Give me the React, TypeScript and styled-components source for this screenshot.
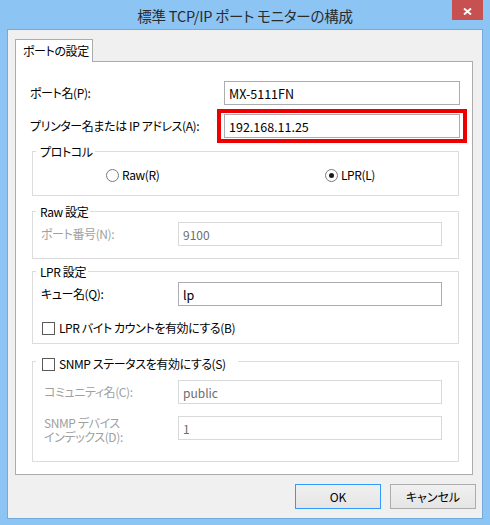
import styled, { createGlobalStyle } from "styled-components";

const GlobalStyle = createGlobalStyle`
  html, body {
    margin: 0;
    padding: 0;
  }
  body {
    background: #8cc4f4;
    font-family: "Noto Sans CJK JP", "Noto Sans", sans-serif;
    font-feature-settings: "palt";
    font-size: 12px;
    letter-spacing: -0.4px;
    color: #000;
  }
  * {
    box-sizing: border-box;
  }
`;

export default function App() {
  return (
    <>
      <GlobalStyle />
      <Window>
        <TitleBar>
          <Title>標準 TCP/IP ポート モニターの構成</Title>
          <CloseButton>
            <svg width="9" height="7" viewBox="0 0 9 7">
              <path d="M1 0.5 L8 6.5 M8 0.5 L1 6.5" stroke="#fff" strokeWidth="1.9" />
            </svg>
          </CloseButton>
        </TitleBar>

        <Client>
          <TabStrip>
            <Tab>ポートの設定</Tab>
          </TabStrip>

          <Page>
            <FieldRow $label={194}>
              <Label>ポート名(P):</Label>
              <TextBox defaultValue="MX-5111FN" readOnly />
            </FieldRow>

            <FieldRow $label={194} $top={9}>
              <Label>プリンター名または IP アドレス(A):</Label>
              <Highlight>
                <TextBox defaultValue="192.168.11.25" readOnly />
              </Highlight>
            </FieldRow>

            <Group $top={13} $pad="15px 8px 12px 8px">
              <Legend>プロトコル</Legend>
              <RadioRow>
                <Choice>
                  <Radio />
                  Raw(R)
                </Choice>
                <Choice>
                  <Radio $checked />
                  LPR(L)
                </Choice>
              </RadioRow>
            </Group>

            <Group $top={15} $pad="10px 16px 12px 8px">
              <Legend>Raw 設定</Legend>
              <FieldRow $label={137}>
                <Label $disabled>ポート番号(N):</Label>
                <TextBox defaultValue="9100" disabled />
              </FieldRow>
            </Group>

            <Group $top={12} $pad="10px 16px 7px 8px">
              <Legend>LPR 設定</Legend>
              <FieldRow $label={137}>
                <Label>キュー名(Q):</Label>
                <TextBox defaultValue="lp" readOnly />
              </FieldRow>
              <CheckRow $top={14}>
                <Check />
                LPR バイト カウントを有効にする(B)
              </CheckRow>
            </Group>

            <Group $top={17} $pad="18px 16px 17px 11px">
              <Legend $offset={-6} $width={202}>
                <CheckRow>
                  <Check />
                  SNMP ステータスを有効にする(S)
                </CheckRow>
              </Legend>
              <FieldRow $label={134}>
                <Label $disabled>コミュニティ名(C):</Label>
                <TextBox defaultValue="public" disabled />
              </FieldRow>
              <FieldRow $label={134} $top={12} $align="start">
                <Label $disabled $lines>
                  SNMP デバイス
                  <br />
                  インデックス(D):
                </Label>
                <TextBox defaultValue="1" disabled />
              </FieldRow>
            </Group>
          </Page>

          <ButtonRow>
            <Button $primary>OK</Button>
            <Button>キャンセル</Button>
          </ButtonRow>
        </Client>
      </Window>
    </>
  );
}

const Window = styled.div`
  width: 490px;
  height: 525px;
  display: flex;
  flex-direction: column;
  padding: 0 7px 6px 7px;
  background: #8cc4f4;
`;

const TitleBar = styled.div`
  height: 29px;
  display: grid;
  grid-template-columns: 1fr auto 1fr;
`;

const Title = styled.div`
  grid-column: 2;
  font-size: 14.5px;
  letter-spacing: -0.2px;
  line-height: 31px;
  color: #2b2b2b;
  white-space: nowrap;
`;

const CloseButton = styled.div`
  grid-column: 3;
  justify-self: end;
  align-self: start;
  width: 31px;
  height: 20px;
  background: #c75050;
  display: flex;
  align-items: center;
  justify-content: center;
  padding-top: 3px;
`;

const Client = styled.div`
  flex: 1;
  display: flex;
  flex-direction: column;
  background: #f0f0f0;
  border: 1px solid #74a9de;
  padding: 9px 6px 0 7px;
`;

const TabStrip = styled.div`
  display: flex;
`;

const Tab = styled.div`
  position: relative;
  z-index: 1;
  width: 78px;
  height: 23px;
  margin-bottom: -1px;
  padding-left: 7px;
  background: #fff;
  border: 1px solid #acacac;
  border-bottom: none;
  line-height: 21px;
  white-space: nowrap;
`;

const Page = styled.div`
  height: 414px;
  margin-right: 3px;
  background: #fff;
  border: 1px solid #acacac;
  padding: 19px 12px 0 14px;
`;

const FieldRow = styled.div<{ $label: number; $top?: number; $align?: string }>`
  display: grid;
  grid-template-columns: ${(p) => p.$label}px 1fr;
  align-items: ${(p) => p.$align ?? "center"};
  margin-top: ${(p) => p.$top ?? 0}px;
`;

const Label = styled.div<{ $disabled?: boolean; $lines?: boolean }>`
  color: ${(p) => (p.$disabled ? "#a0a0a0" : "#000")};
  line-height: ${(p) => (p.$lines ? "14px" : "16px")};
  white-space: nowrap;
`;

const TextBox = styled.input`
  display: block;
  width: 100%;
  height: 24px;
  margin: 0;
  padding: 0 4px;
  border: 1px solid #abadb3;
  background: #fff;
  font: inherit;
  font-size: 12.5px;
  letter-spacing: 0;
  color: #000;
  outline: none;

  &:disabled {
    border-color: #d9d9d9;
    color: #6d6d6d;
    font-size: 12px;
  }
`;

const Highlight = styled.div`
  margin: -5px -7px;
  padding: 1px 3px;
  border: 4px solid #ee0000;
  background: #fff;
`;

const Group = styled.div<{ $top: number; $pad: string }>`
  position: relative;
  margin: ${(p) => p.$top}px 1px 0 2px;
  padding: ${(p) => p.$pad};
  border: 1px solid #dcdcdc;
`;

const Legend = styled.div<{ $offset?: number; $width?: number }>`
  position: absolute;
  top: ${(p) => p.$offset ?? -8}px;
  left: 3px;
  width: ${(p) => (p.$width ? `${p.$width}px` : "auto")};
  padding: 0 2px 0 4px;
  background: #fff;
  line-height: 16px;
  white-space: nowrap;

  & > div {
    margin-left: 2px;
  }
`;

const RadioRow = styled.div`
  display: grid;
  grid-template-columns: 219px 1fr;
  padding-left: 65px;
  line-height: 16px;
`;

const Choice = styled.div`
  display: flex;
  align-items: center;
  gap: 3px;
`;

const Radio = styled.span<{ $checked?: boolean }>`
  width: 13px;
  height: 13px;
  border-radius: 50%;
  border: 1px solid #7a7a7a;
  background: #fff;
  display: flex;
  align-items: center;
  justify-content: center;

  &::after {
    content: "";
    display: ${(p) => (p.$checked ? "block" : "none")};
    width: 5px;
    height: 5px;
    border-radius: 50%;
    background: #1a1a1a;
  }
`;

const CheckRow = styled.div<{ $top?: number }>`
  display: flex;
  align-items: center;
  gap: 4px;
  margin-top: ${(p) => p.$top ?? 0}px;
  margin-left: 1px;
  line-height: 16px;
  white-space: nowrap;
`;

const Check = styled.span`
  width: 13px;
  height: 13px;
  border: 1px solid #5a5a5a;
  background: #fff;
`;

const ButtonRow = styled.div`
  display: flex;
  justify-content: flex-end;
  gap: 9px;
  margin-top: 9px;
`;

const Button = styled.button<{ $primary?: boolean }>`
  width: 86px;
  height: 25px;
  margin: 0;
  padding: 0;
  border: 1px solid ${(p) => (p.$primary ? "#3399ff" : "#acacac")};
  background: linear-gradient(#f0f0f0, #e5e5e5);
  font: inherit;
  color: #000;
`;
